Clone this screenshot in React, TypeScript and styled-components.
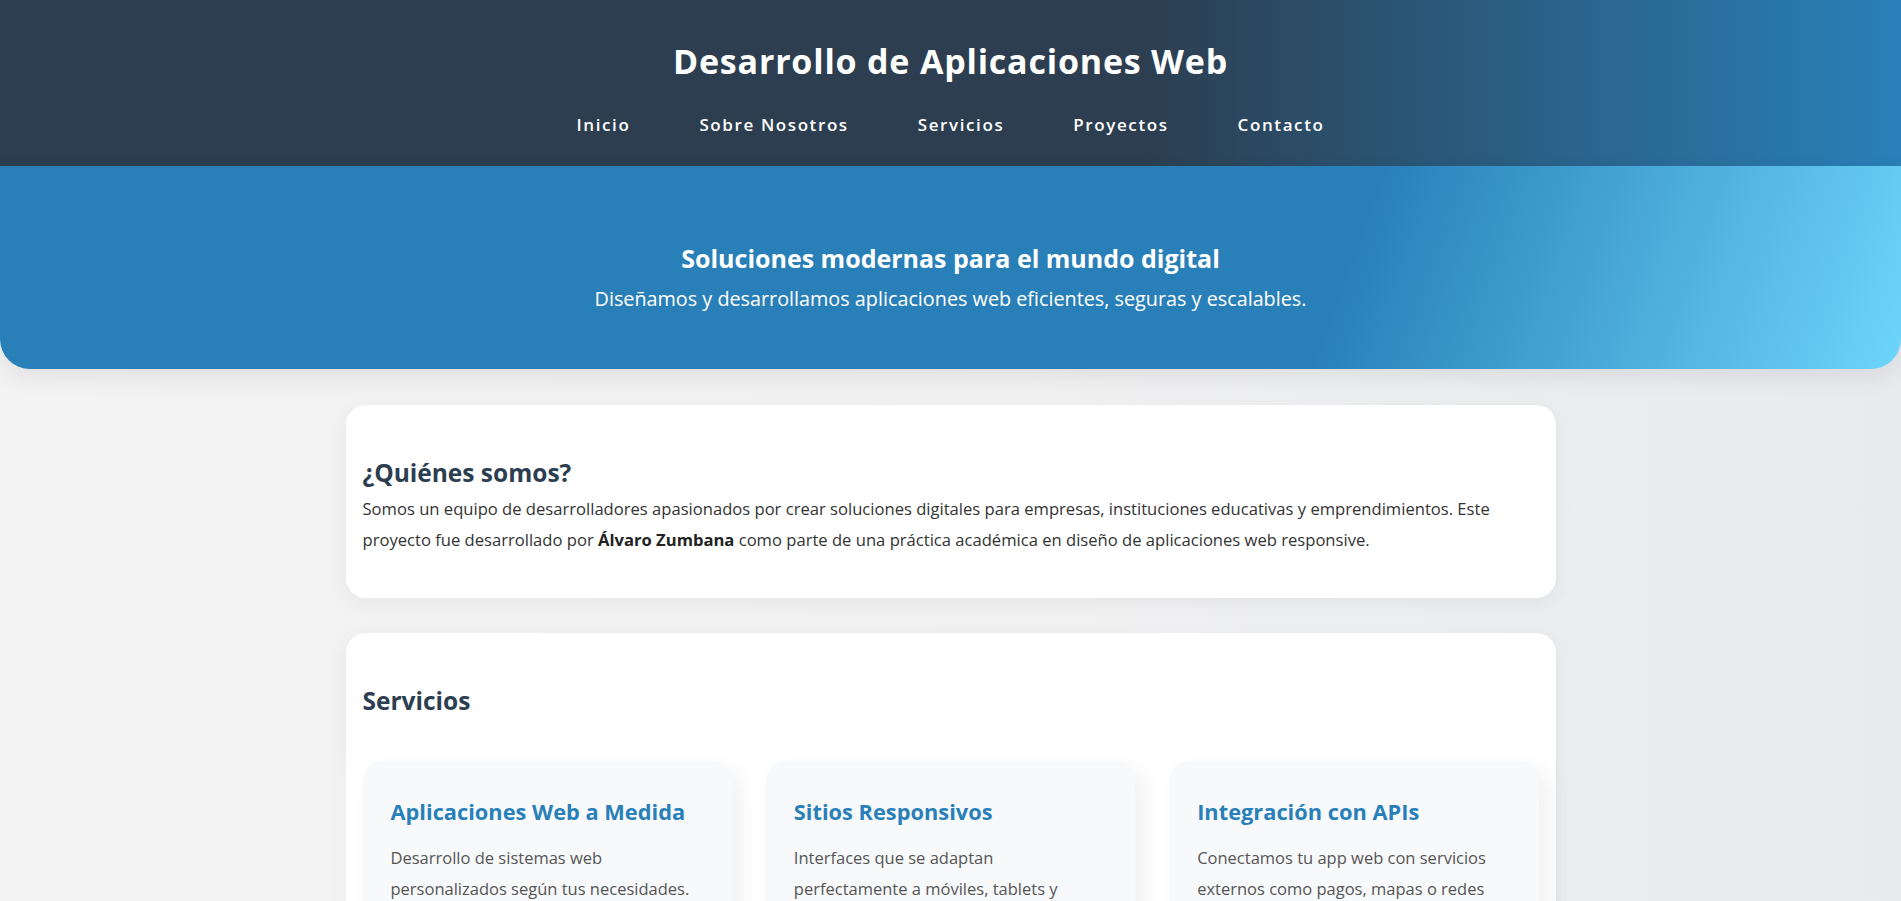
import { createGlobalStyle, styled } from "styled-components";

const GlobalStyle = createGlobalStyle`
  * {
    box-sizing: border-box;
  }

  body {
    margin: 0;
    font-family: "Open Sans", "Noto Sans", sans-serif;
    color: #333;
    background: linear-gradient(to right, #f3f3f3 0%, #f1f1f2 55%, #e8eaed 100%);
    min-height: 100vh;
  }
`;

const navItems = ["Inicio", "Sobre Nosotros", "Servicios", "Proyectos", "Contacto"];

const services = [
  {
    title: "Aplicaciones Web a Medida",
    text: "Desarrollo de sistemas web personalizados según tus necesidades.",
  },
  {
    title: "Sitios Responsivos",
    text: "Interfaces que se adaptan perfectamente a móviles, tablets y computadoras.",
  },
  {
    title: "Integración con APIs",
    text: "Conectamos tu app web con servicios externos como pagos, mapas o redes sociales.",
  },
];

export default function App() {
  return (
    <>
      <GlobalStyle />
      <Header>
        <Title>Desarrollo de Aplicaciones Web</Title>
        <Nav>
          {navItems.map((item) => (
            <NavLink key={item} href="#">
              {item}
            </NavLink>
          ))}
        </Nav>
      </Header>

      <Hero>
        <HeroTitle>Soluciones modernas para el mundo digital</HeroTitle>
        <HeroText>Diseñamos y desarrollamos aplicaciones web eficientes, seguras y escalables.</HeroText>
      </Hero>

      <Main>
        <Section>
          <SectionTitle>¿Quiénes somos?</SectionTitle>
          <Paragraph>
            Somos un equipo de desarrolladores apasionados por crear soluciones digitales para empresas,
            instituciones educativas y emprendimientos. Este proyecto fue desarrollado por{" "}
            <strong>Álvaro Zumbana</strong> como parte de una práctica académica en diseño de aplicaciones web
            responsive.
          </Paragraph>
        </Section>

        <Section>
          <SectionTitle $spaced>Servicios</SectionTitle>
          <ServiceGrid>
            {services.map((s) => (
              <ServiceCard key={s.title}>
                <ServiceTitle>{s.title}</ServiceTitle>
                <ServiceText>{s.text}</ServiceText>
              </ServiceCard>
            ))}
          </ServiceGrid>
        </Section>
      </Main>
    </>
  );
}

const Header = styled.header`
  background: linear-gradient(to right, #2c3e50 60%, #2980b9 100%);
  color: #fff;
  text-align: center;
  padding: 39px 0 29px;
  height: 166px;
`;

const Title = styled.h1`
  margin: 0 0 30px;
  font-size: 34px;
  line-height: 44px;
  font-weight: 700;
  letter-spacing: 0.8px;
`;

const Nav = styled.nav`
  display: flex;
  justify-content: center;
  gap: 69px;
`;

const NavLink = styled.a`
  color: #fff;
  text-decoration: none;
  font-size: 17px;
  line-height: 24px;
  font-weight: 600;
  letter-spacing: 1.6px;
`;

const Hero = styled.section`
  height: 203px;
  padding-top: 76px;
  text-align: center;
  color: #fff;
  background: linear-gradient(110deg, #2980b9 70%, #6dd5fa 100%);
  border-radius: 0 0 30px 30px;
  box-shadow: 0 8px 25px rgba(0, 0, 0, 0.08);
`;

const HeroTitle = styled.h2`
  margin: 0 0 10px;
  font-size: 25px;
  line-height: 33px;
  font-weight: 700;
`;

const HeroText = styled.p`
  margin: 0;
  font-size: 19.8px;
  line-height: 27px;
`;

const Main = styled.main`
  width: 1210px;
  margin: 36px auto 0;
  display: flex;
  flex-direction: column;
  gap: 35px;
`;

const Section = styled.section`
  background: #fff;
  border-radius: 20px;
  padding: 52px 17px 43px;
  box-shadow: 0 5px 20px rgba(0, 0, 0, 0.05);
`;

const SectionTitle = styled.h2<{ $spaced?: boolean }>`
  margin: 0 0 ${(p) => (p.$spaced ? "44px" : "5px")};
  font-size: 24.5px;
  line-height: 32px;
  font-weight: 700;
  color: #2c3e50;
`;

const Paragraph = styled.p`
  margin: 0;
  font-size: 16.6px;
  line-height: 30.5px;
  color: #333;

  strong {
    color: #222;
  }
`;

const ServiceGrid = styled.div`
  display: grid;
  grid-template-columns: repeat(3, 1fr);
  gap: 34px;
`;

const ServiceCard = styled.div`
  background: #f8f9fb;
  border-radius: 20px;
  padding: 36px 28px 32px;
  box-shadow: 10px 10px 24px rgba(0, 0, 0, 0.06), -10px -10px 24px #ffffff;
`;

const ServiceTitle = styled.h3`
  margin: 0 0 17px;
  font-size: 21.8px;
  line-height: 29px;
  font-weight: 700;
  color: #2980b9;
`;

const ServiceText = styled.p`
  margin: 0;
  font-size: 16.5px;
  line-height: 30.5px;
  color: #555;
`;
